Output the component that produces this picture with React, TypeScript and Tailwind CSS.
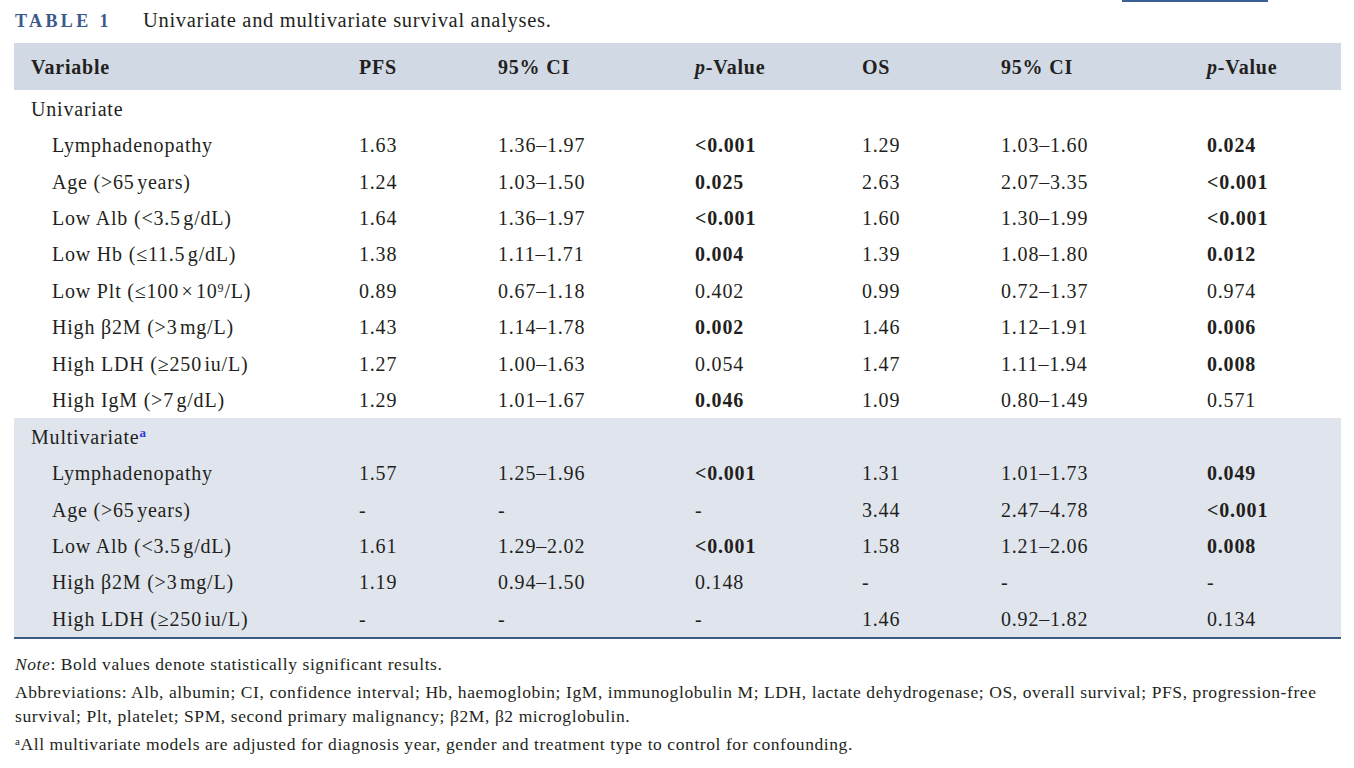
const COLS = "grid grid-cols-[345px_139px_197px_167px_139px_206px_1fr] items-center";

type Row = { label: React.ReactNode; v: string[]; bold: boolean[] };

const UNI: Row[] = [
  { label: "Lymphadenopathy", v: ["1.63", "1.36–1.97", "<0.001", "1.29", "1.03–1.60", "0.024"], bold: [false, false, true, false, false, true] },
  { label: "Age (>65\u200ayears)", v: ["1.24", "1.03–1.50", "0.025", "2.63", "2.07–3.35", "<0.001"], bold: [false, false, true, false, false, true] },
  { label: "Low Alb (<3.5\u200ag/dL)", v: ["1.64", "1.36–1.97", "<0.001", "1.60", "1.30–1.99", "<0.001"], bold: [false, false, true, false, false, true] },
  { label: "Low Hb (≤11.5\u200ag/dL)", v: ["1.38", "1.11–1.71", "0.004", "1.39", "1.08–1.80", "0.012"], bold: [false, false, true, false, false, true] },
  {
    label: (
      <>
        Low Plt (≤100{"\u200a"}×{"\u200a"}10<sup className="text-[12px]">9</sup>/L)
      </>
    ),
    v: ["0.89", "0.67–1.18", "0.402", "0.99", "0.72–1.37", "0.974"],
    bold: [false, false, false, false, false, false],
  },
  { label: "High β2M (>3\u200amg/L)", v: ["1.43", "1.14–1.78", "0.002", "1.46", "1.12–1.91", "0.006"], bold: [false, false, true, false, false, true] },
  { label: "High LDH (≥250\u200aiu/L)", v: ["1.27", "1.00–1.63", "0.054", "1.47", "1.11–1.94", "0.008"], bold: [false, false, false, false, false, true] },
  { label: "High IgM (>7\u200ag/dL)", v: ["1.29", "1.01–1.67", "0.046", "1.09", "0.80–1.49", "0.571"], bold: [false, false, true, false, false, false] },
];

const MULTI: Row[] = [
  { label: "Lymphadenopathy", v: ["1.57", "1.25–1.96", "<0.001", "1.31", "1.01–1.73", "0.049"], bold: [false, false, true, false, false, true] },
  { label: "Age (>65\u200ayears)", v: ["-", "-", "-", "3.44", "2.47–4.78", "<0.001"], bold: [false, false, false, false, false, true] },
  { label: "Low Alb (<3.5\u200ag/dL)", v: ["1.61", "1.29–2.02", "<0.001", "1.58", "1.21–2.06", "0.008"], bold: [false, false, true, false, false, true] },
  { label: "High β2M (>3\u200amg/L)", v: ["1.19", "0.94–1.50", "0.148", "-", "-", "-"], bold: [false, false, false, false, false, false] },
  { label: "High LDH (≥250\u200aiu/L)", v: ["-", "-", "-", "1.46", "0.92–1.82", "0.134"], bold: [false, false, false, false, false, false] },
];

function DataRow({ row }: { row: Row }) {
  return (
    <div className={`${COLS} h-[36.4px]`}>
      <div className="pl-[38px]">{row.label}</div>
      {row.v.map((val, i) => (
        <div key={i} className={row.bold[i] ? "font-bold" : ""}>
          {val}
        </div>
      ))}
    </div>
  );
}

export default function App() {
  return (
    <div className="relative w-[1354px] h-[768px] bg-white text-[#231f20] font-['Liberation_Serif',serif] overflow-hidden">
      {/* top tab line */}
      <div className="absolute left-[1122px] top-0 w-[146px] h-[2px] bg-[#3c5f96]" />

      <div className="flex items-baseline pt-[5px] pl-[15px] h-[43px]">
        <span className="text-[18px] font-bold tracking-[3.4px] text-[#3b5a8a] w-[128px]">TABLE 1</span>
        <span className="text-[20.5px] tracking-[0.7px]">Univariate and multivariate survival analyses.</span>
      </div>

      <div className="ml-[14px] w-[1327px] text-[20px] tracking-[0.8px]">
        <div className={`${COLS} h-[47px] bg-[#d1d9e4] font-bold`}>
          <div className="pl-[17px]">Variable</div>
          <div>PFS</div>
          <div>95% CI</div>
          <div>
            <i>p</i>-Value
          </div>
          <div>OS</div>
          <div>95% CI</div>
          <div>
            <i>p</i>-Value
          </div>
        </div>

        <div className="h-[37px] flex items-center pl-[17px]">Univariate</div>
        {UNI.map((r, i) => (
          <DataRow key={i} row={r} />
        ))}

        <div className="bg-[#e0e5ed] border-b-2 border-[#3d5a87]">
          <div className="h-[37px] flex items-center pl-[17px]">
            <span>
              Multivariate<sup className="text-[13px] font-bold text-[#2a3bd6]">a</sup>
            </span>
          </div>
          {MULTI.map((r, i) => (
            <DataRow key={i} row={r} />
          ))}
        </div>
      </div>

      <div className="pl-[15px] pr-[20px] pt-[13px] text-[17.5px] tracking-[0.58px] leading-[24px]">
        <p>
          <i>Note</i>: Bold values denote statistically significant results.
        </p>
        <p className="mt-[4px]">
          Abbreviations: Alb, albumin; CI, confidence interval; Hb, haemoglobin; IgM, immunoglobulin M; LDH, lactate
          dehydrogenase; OS, overall survival; PFS, progression-free survival; Plt, platelet; SPM, second primary
          malignancy; β2M, β2 microglobulin.
        </p>
        <p className="mt-[4px]">
          <sup className="text-[11px]">a</sup>All multivariate models are adjusted for diagnosis year, gender and
          treatment type to control for confounding.
        </p>
      </div>
    </div>
  );
}
